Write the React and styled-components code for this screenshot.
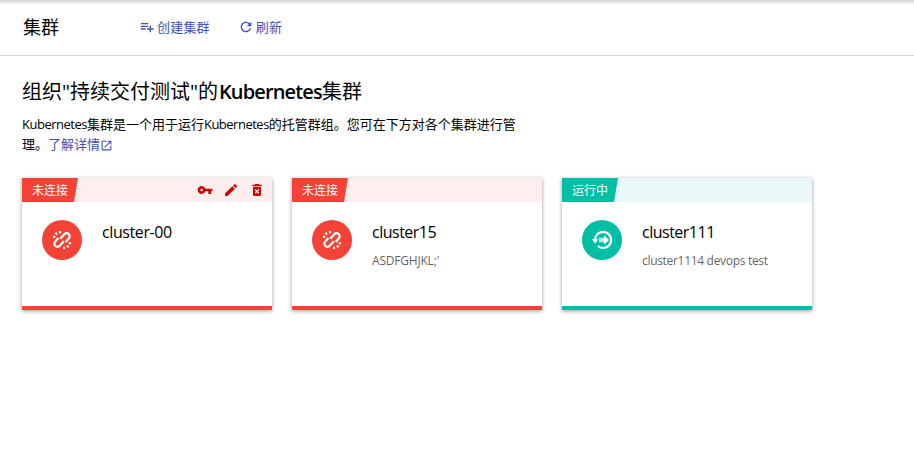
import React from 'react';
import styled, { createGlobalStyle } from 'styled-components';
import { MdPlaylistAdd, MdRefresh, MdOpenInNew, MdVpnKey, MdModeEdit, MdDeleteForever } from 'react-icons/md';

const GlobalStyle = createGlobalStyle`
  * { box-sizing: border-box; }
  body {
    margin: 0;
    background: #fff;
    color: #000;
    font: 13px/20px "Open Sans", "Noto Sans CJK SC", sans-serif;
    overflow: hidden;
  }
  svg { display: block; flex: none; }
`;

const Page = styled.div`
  height: 449px;
  background: linear-gradient(#d3d3d3, #fff 5px);
`;

const Header = styled.header`
  display: flex;
  align-items: center;
  height: 56px;
  padding: 0 0 2px 23px;
  border-bottom: 1px solid #d3d3d3;
`;

const PageTitle = styled.h1`
  width: 116px;
  margin: 0;
  font-size: 18px;
  font-weight: 400;
  line-height: 24px;
`;

const Action = styled.button`
  display: flex;
  align-items: center;
  gap: 2px;
  margin: 0 28px 0 0;
  padding: 0;
  border: 0;
  background: none;
  color: #3f51b5;
  font: inherit;
  letter-spacing: 0.2px;
`;

const Content = styled.main`
  padding: 22px 22px 0;
`;

const Heading = styled.h2`
  margin: 0;
  font-size: 20px;
  font-weight: 400;
  line-height: 28px;
  white-space: nowrap;
`;

const Strong = styled.span`
  margin-left: 1px;
  font-family: "Open Sans", sans-serif;
  font-weight: 600;
  letter-spacing: -0.85px;
`;

const Description = styled.p`
  margin: 8px 0 0;
  white-space: nowrap;
`;

const Latin = styled.span`
  letter-spacing: ${(p) => p.$spacing}px;
`;

const Link = styled.a`
  color: #3f51b5;
  svg { display: inline-block; vertical-align: -3px; }
`;

const Cards = styled.section`
  display: flex;
  gap: 20px;
  margin-top: 24px;
`;

const Card = styled.article`
  width: 250px;
  height: 132px;
  border-bottom: 4px solid ${(p) => p.$color};
  background: #fff;
  box-shadow: 0 1px 4px rgba(0, 0, 0, 0.4);
`;

const CardBar = styled.div`
  display: flex;
  justify-content: space-between;
  height: 24px;
  background: ${(p) => p.$tint};
`;

const Tag = styled.span`
  width: 56px;
  padding-left: 10px;
  background: ${(p) => p.$color};
  clip-path: polygon(0 0, 100% 0, calc(100% - 4px) 100%, 0 100%);
  color: #fff;
  font-size: 12px;
  line-height: 25px;
`;

const Tools = styled.div`
  display: flex;
  align-items: center;
  gap: 10px;
  padding-right: 7px;
  color: #d50000;
`;

const CardBody = styled.div`
  display: flex;
  gap: 20px;
  padding: 18px 20px 0;
`;

const Avatar = styled.div`
  display: grid;
  place-items: center;
  width: 40px;
  height: 40px;
  border-radius: 50%;
  background: ${(p) => p.$color};
  color: #fff;
`;

const Name = styled.div`
  font-size: 16px;
  line-height: 24px;
  letter-spacing: ${(p) => p.$spacing}px;
`;

const Note = styled.div`
  margin-top: 7px;
  color: rgba(0, 0, 0, 0.65);
  font-size: 12px;
  letter-spacing: ${(p) => p.$spacing}px;
`;

const BrokenLinkIcon = () => (
  <svg width="20" height="20" viewBox="0 0 20 20" fill="none" stroke="currentColor" strokeWidth="2.2">
    <path d="M8.2 8.8 12.3 4.2a3 3 0 0 1 4.5 4.2L13.6 11.9" />
    <path d="M11.8 11.2 7.7 15.8a3 3 0 0 1-4.5-4.2L6.4 8.1" />
    <path strokeWidth="2.1" d="M7.8 1 8.1 3.4M3.4 2.8 5.1 4.5M1 6.4 3.2 7.1M12.2 19 11.9 16.6M16.6 17.2 14.9 15.5M19 13.6 16.8 12.9" />
  </svg>
);

const RunningIcon = () => (
  <svg width="22" height="20" viewBox="0 0 22 20" fill="none" stroke="currentColor" strokeWidth="2.2">
    <path d="M4.1 10a8 8 0 1 1 3 6.2" />
    <path fill="currentColor" stroke="none" d="M.8 9.3h6.4L4.1 13.5zM11.4 7.8h1.8V5.6l5 4.4-5 4.4v-2.2h-1.8zM8 7.8h.9v4.4H8zM9.4 7.8H11v4.4H9.4z" />
  </svg>
);

const states = {
  disconnected: { label: '未连接', color: '#f44336', tint: '#feefee', Icon: BrokenLinkIcon },
  running: { label: '运行中', color: '#00bfa5', tint: '#e9f8f8', Icon: RunningIcon },
};

const clusters = [
  { name: 'cluster-00', state: 'disconnected', tools: true, spacing: -0.4 },
  { name: 'cluster15', state: 'disconnected', note: "ASDFGHJKL;'", spacing: -0.5, noteSpacing: -0.2 },
  { name: 'cluster111', state: 'running', note: 'cluster1114 devops test', spacing: -0.5, noteSpacing: -0.31 },
];

function ClusterCard({ cluster }) {
  const { label, color, tint, Icon } = states[cluster.state];
  return (
    <Card $color={color}>
      <CardBar $tint={tint}>
        <Tag $color={color}>{label}</Tag>
        {cluster.tools && (
          <Tools>
            <MdVpnKey size={16} />
            <MdModeEdit size={16} />
            <MdDeleteForever size={16} />
          </Tools>
        )}
      </CardBar>
      <CardBody>
        <Avatar $color={color}><Icon /></Avatar>
        <div>
          <Name $spacing={cluster.spacing}>{cluster.name}</Name>
          {cluster.note && <Note $spacing={cluster.noteSpacing}>{cluster.note}</Note>}
        </div>
      </CardBody>
    </Card>
  );
}

export default function App() {
  return (
    <Page>
      <GlobalStyle />
      <Header>
        <PageTitle>集群</PageTitle>
        <Action><MdPlaylistAdd size={16} />创建集群</Action>
        <Action><MdRefresh size={16} />刷新</Action>
      </Header>
      <Content>
        <Heading>组织"持续交付测试"的<Strong>Kubernetes</Strong>集群</Heading>
        <Description>
          <Latin $spacing={-0.5}>Kubernetes</Latin>集群是一个用于运行<Latin $spacing={-0.5}>Kubernetes</Latin>的托管群组。您可在下方对各个集群进行管<br />
          理。<Link>了解详情<MdOpenInNew size={13} /></Link>
        </Description>
        <Cards>
          {clusters.map((c) => <ClusterCard key={c.name} cluster={c} />)}
        </Cards>
      </Content>
    </Page>
  );
}
